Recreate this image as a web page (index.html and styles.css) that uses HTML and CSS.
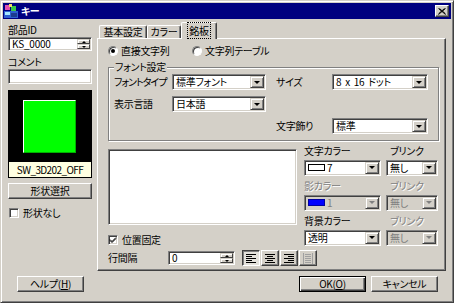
FILE: index.html
```html
<!DOCTYPE html>
<html lang="ja">
<head>
    <meta charset="UTF-8">
    <title>キー</title>
    <link rel="stylesheet" href="styles.css">
</head>
<body>
<div class="window">
    <div class="titlebar">
        <svg class="app-icon" width="14" height="14" viewBox="0 0 14 14">
            <rect x="0" y="7" width="14" height="7" fill="#2f5fd0"/>
            <rect x="1" y="8" width="5" height="3" fill="#a8e8ff"/>
            <rect x="7" y="9" width="6" height="4" fill="#1c3a90"/>
            <rect x="1" y="1" width="5" height="5" fill="#e050b0"/>
            <rect x="7" y="2" width="5" height="5" fill="#38c848"/>
            <rect x="5" y="0" width="3" height="3" fill="#f0e060"/>
        </svg>
        <span class="title">キー</span>
        <span class="close">
            <svg width="8" height="7" viewBox="0 0 8 7"><path d="M0.5 0.5L7.5 6.5M7.5 0.5L0.5 6.5M1.5 0.5L7.5 5.8M6.5 0.5L0.5 5.8" stroke="#000" stroke-width="1"/></svg>
        </span>
    </div>

    <div class="content">
        <div class="side">
            <div class="lbl">部品ID</div>
            <div class="field spin">
                <span class="val">KS_0000</span>
                <span class="spinner"><span class="sp up"><i></i></span><span class="sp down"><i></i></span></span>
            </div>
            <div class="lbl comment-lbl">コメント</div>
            <div class="field comment"></div>
            <div class="preview">
                <div class="stage"><div class="shape"></div></div>
                <div class="shape-name">SW_3D202_OFF</div>
            </div>
            <div class="btn shape-btn">形状選択</div>
            <div class="check no-shape"><span class="box"></span>形状なし</div>
            <div class="btn help">ヘルプ(<u>H</u>)</div>
        </div>

        <div class="main">
            <div class="tabs">
                <div class="tab t1">基本設定</div>
                <div class="tab t2">カラー</div>
                <div class="tab active"><span class="focus">銘板</span></div>
            </div>
            <div class="panel">
                <div class="radios">
                    <div class="radio on"><span class="dot"></span>直接文字列</div>
                    <div class="radio"><span class="dot"></span>文字列テーブル</div>
                </div>

                <fieldset class="group">
                    <legend>フォント設定</legend>
                    <div class="font-grid">
                        <span class="tight">フォントタイプ</span>
                        <div class="select"><span class="val">標準フォント</span><span class="drop"><i></i></span></div>
                        <span></span>
                        <span>サイズ</span>
                        <div class="select"><span class="val spaced">8 x 16 ドット</span><span class="drop"><i></i></span></div>
                        <span>表示言語</span>
                        <div class="select"><span class="val">日本語</span><span class="drop"><i></i></span></div>
                        <span class="deco-lbl">文字飾り</span>
                        <div class="select deco"><span class="val">標準</span><span class="drop"><i></i></span></div>
                    </div>
                </fieldset>

                <div class="lower">
                    <div class="left">
                        <div class="field textbox"></div>
                        <div class="check fixed"><span class="box"><svg width="8" height="8" viewBox="0 0 8 8"><path d="M1 3.5L3 5.5L7 1.5M1 4.5L3 6.5L7 2.5" stroke="#000" fill="none"/></svg></span>位置固定</div>
                    </div>
                    <div class="colors">
                        <span class="clbl">文字カラー</span>
                        <span class="clbl blink">ブリンク</span>
                        <div class="select"><span class="val"><i class="swatch"></i>7</span><span class="drop"><i></i></span></div>
                        <div class="select"><span class="val">無し</span><span class="drop"><i></i></span></div>

                        <span class="clbl next dis">影カラー</span>
                        <span class="clbl next blink dis">ブリンク</span>
                        <div class="select dis"><span class="val"><i class="swatch blue"></i>1</span><span class="drop"><i></i></span></div>
                        <div class="select dis"><span class="val">無し</span><span class="drop"><i></i></span></div>

                        <span class="clbl next">背景カラー</span>
                        <span class="clbl next blink dis">ブリンク</span>
                        <div class="select"><span class="val">透明</span><span class="drop"><i></i></span></div>
                        <div class="select dis"><span class="val">無し</span><span class="drop"><i></i></span></div>
                    </div>
                    <div class="spacing">
                        <span class="sp-lbl">行間隔</span>
                        <div class="field spin num">
                            <span class="val">0</span>
                            <span class="spinner"><span class="sp up"><i></i></span><span class="sp down"><i></i></span></span>
                        </div>
                        <div class="align">
                            <span class="abtn pressed"><svg width="10" height="9" viewBox="0 0 10 9"><path d="M0 0.5H10M0 2.5H6M0 4.5H10M0 6.5H6M0 8.5H10" stroke="#000"/></svg></span>
                            <span class="abtn"><svg width="10" height="9" viewBox="0 0 10 9"><path d="M0 0.5H10M2 2.5H8M0 4.5H10M2 6.5H8M0 8.5H10" stroke="#000"/></svg></span>
                            <span class="abtn"><svg width="10" height="9" viewBox="0 0 10 9"><path d="M0 0.5H10M4 2.5H10M0 4.5H10M4 6.5H10M0 8.5H10" stroke="#000"/></svg></span>
                            <span class="abtn off"><svg width="10" height="11" viewBox="0 0 10 11"><path d="M0.5 0V11M9.5 0V11M2 1.5H8M2 3.5H8M2 5.5H8M2 7.5H8M2 9.5H8" stroke="#a0a0a0"/></svg></span>
                        </div>
                    </div>
                </div>
            </div>
            <div class="actions">
                <div class="btn default">OK(<u>O</u>)</div>
                <div class="btn">キャンセル</div>
            </div>
        </div>
    </div>
</div>
</body>
</html>
```

FILE: styles.css
```css
* {
    box-sizing: border-box;
}
body {
    margin: 0;
    font-family: "Noto Sans CJK JP", "Liberation Sans", sans-serif;
    font-size: 10px;
    line-height: 12px;
    letter-spacing: -0.3px;
    white-space: nowrap;
    color: #000;
    font-feature-settings: "palt";
    background: #d4d0c8;
}
.window {
    width: 454px;
    height: 303px;
    background: #d4d0c8;
    border: 1px solid;
    border-color: #d4d0c8 #404040 #404040 #d4d0c8;
    box-shadow: inset 1px 1px #fff, inset -1px -1px #808080;
    padding: 2px;
    display: flex;
    flex-direction: column;
}

/* title bar */
.titlebar {
    height: 16px;
    background: #000080;
    color: #fff;
    display: flex;
    align-items: center;
    padding: 0 2px 0 1px;
}
.app-icon {
    flex: none;
}
.title {
    font-weight: bold;
    margin-left: 3px;
    flex: 1;
}
.close {
    width: 14px;
    height: 12px;
    background: #d4d0c8;
    border: 1px solid;
    border-color: #fff #404040 #404040 #fff;
    box-shadow: inset -1px -1px #808080;
    display: flex;
    align-items: center;
    justify-content: center;
}

/* layout */
.content {
    flex: 1;
    display: grid;
    grid-template-columns: 84px 349px;
    column-gap: 5px;
    padding: 2px 5px 8px 5px;
}
.side {
    display: flex;
    flex-direction: column;
}
.main {
    display: flex;
    flex-direction: column;
    padding-top: 1px;
}

/* generic controls */
.lbl {
    margin-top: 3px;
    height: 12px;
}
.comment-lbl {
    margin-top: 5px;
}
.field {
    background: #fff;
    border: 1px solid;
    border-color: #808080 #fff #fff #808080;
    box-shadow: inset 1px 1px #404040, inset -1px -1px #d4d0c8;
    padding: 1px;
    display: flex;
    align-items: center;
}
.field .val {
    flex: 1;
    padding-left: 2px;
    line-height: 10px;
}
.spin {
    height: 14px;
    margin-top: 1px;
}
.spin .val {
    letter-spacing: -0.2px;
}
.comment {
    height: 15px;
    margin-top: 1px;
}
.spinner {
    width: 13px;
    height: 100%;
    display: flex;
    flex-direction: column;
}
.sp {
    flex: 1;
    background: #d4d0c8;
    border: 1px solid;
    border-color: #d4d0c8 #404040 #404040 #d4d0c8;
    box-shadow: inset 1px 1px #fff;
    display: flex;
    align-items: center;
    justify-content: center;
}
.sp i {
    width: 0;
    height: 0;
    border-left: 2px solid transparent;
    border-right: 2px solid transparent;
}
.sp.up i {
    border-bottom: 2px solid #000;
}
.sp.down i {
    border-top: 2px solid #000;
}

.btn {
    height: 16px;
    background: #d4d0c8;
    border: 1px solid;
    border-color: #fff #404040 #404040 #fff;
    box-shadow: inset -1px -1px #808080;
    text-align: center;
    line-height: 13px;
}
.btn.default {
    border-color: #000;
    box-shadow: inset 1px 1px #fff, inset -1px -1px #404040, inset -2px -2px #808080;
}

.check {
    display: flex;
    align-items: center;
    height: 12px;
}
.box {
    width: 10px;
    height: 10px;
    background: #fff;
    border: 1px solid;
    border-color: #808080 #fff #fff #808080;
    box-shadow: inset 1px 1px #404040, inset -1px -1px #d4d0c8;
    margin-right: 4px;
    display: flex;
    align-items: center;
    justify-content: center;
}

/* left column */
.preview {
    margin-top: 6px;
    border: 1px solid #000;
    background: #000;
}
.stage {
    height: 71px;
    display: flex;
    align-items: center;
    justify-content: center;
    padding-right: 2px;
}
.shape {
    width: 53px;
    height: 53px;
    background: #00ff00;
    border-top: 1px solid #fff;
    border-left: 1px solid #fff;
    border-right: 1px solid #00b000;
    border-bottom: 1px solid #00b000;
}
.shape-name {
    height: 15px;
    background: #ffffe1;
    line-height: 15px;
    text-align: center;
    letter-spacing: -0.6px;
    font-feature-settings: normal;
}
.shape-btn {
    margin-top: 5px;
}
.no-shape {
    margin-top: 8px;
    padding-left: 1px;
}
.help {
    margin: auto 8px 0 9px;
}

/* tabs */
.tabs {
    display: flex;
    align-items: flex-end;
    height: 16px;
    padding-left: 2px;
}
.tab {
    height: 13px;
    border: 1px solid;
    border-bottom: 0;
    border-color: #fff #404040 #404040 #fff;
    box-shadow: inset -1px 0 #808080;
    border-radius: 2px 2px 0 0;
    text-align: center;
    line-height: 12px;
}
.t1 {
    width: 48px;
}
.t2 {
    width: 34px;
}
.tab.active {
    width: 36px;
    height: 17px;
    margin-bottom: -1px;
    background: #d4d0c8;
    position: relative;
    z-index: 1;
    padding-top: 2px;
}
.focus {
    outline: 1px dotted #000;
    padding: 0 1px;
}
.panel {
    flex: 1;
    border: 1px solid;
    border-color: #fff #404040 #404040 #fff;
    box-shadow: inset -1px -1px #808080;
    padding: 6px 7px 0 10px;
}
.actions {
    margin-top: 5px;
    display: flex;
    justify-content: flex-end;
    gap: 5px;
    padding-right: 8px;
}
.actions .btn {
    width: 67px;
}

/* radios */
.radios {
    display: flex;
    height: 12px;
}
.radio {
    display: flex;
    align-items: center;
}
.radio:first-child {
    width: 84px;
}
.dot {
    width: 10px;
    height: 10px;
    border-radius: 50%;
    background: #fff;
    border: 1px solid;
    border-color: #808080 #fff #fff #808080;
    box-shadow: inset 1px 1px #404040;
    margin-right: 3px;
    display: flex;
    align-items: center;
    justify-content: center;
}
.radio.on .dot::after {
    content: "";
    width: 4px;
    height: 4px;
    border-radius: 50%;
    background: #000;
}

/* group box */
.group {
    width: 331px;
    margin: 4px 0 0;
    padding: 0 5px 6px;
    border: 1px solid #808080;
    box-shadow: inset 1px 1px #fff, 1px 1px #fff;
}
.group legend {
    padding: 0 1px;
    background: #d4d0c8;
    line-height: 12px;
}
.font-grid {
    margin-top: 1px;
    display: grid;
    grid-template-columns: 58px 94px 10px 56px 96px;
    grid-template-rows: 16px 16px 16px;
    row-gap: 6px;
    align-items: center;
}
.tight {
    letter-spacing: -1px;
}
.spaced {
    word-spacing: 2px;
}
.deco-lbl {
    grid-row: 3;
    grid-column: 4;
}
.deco {
    grid-row: 3;
    grid-column: 5;
}

/* dropdowns */
.select {
    height: 16px;
    display: flex;
    background: #fff;
    border: 1px solid;
    border-color: #808080 #fff #fff #808080;
    box-shadow: inset 1px 1px #404040, inset -1px -1px #d4d0c8;
    padding: 1px;
}
.select .val {
    flex: 1;
    padding-left: 2px;
    line-height: 12px;
    display: flex;
    align-items: center;
}
.drop {
    width: 14px;
    background: #d4d0c8;
    border: 1px solid;
    border-color: #d4d0c8 #404040 #404040 #d4d0c8;
    box-shadow: inset 1px 1px #fff, inset -1px -1px #808080;
    display: flex;
    align-items: center;
    justify-content: center;
}
.drop i {
    width: 0;
    height: 0;
    border-left: 3px solid transparent;
    border-right: 3px solid transparent;
    border-top: 3px solid #000;
}
.select.dis {
    background: #d4d0c8;
}
.select.dis .val {
    color: #808080;
}
.select.dis .drop i {
    border-top-color: #808080;
}
.swatch {
    width: 17px;
    height: 7px;
    border: 1px solid #000;
    background: #fff;
    margin-right: 2px;
}
.swatch.blue {
    background: #0000ff;
    border-color: #0000a0;
}

/* lower area */
.lower {
    margin-top: 4px;
    display: grid;
    grid-template-columns: 189px 134px;
    column-gap: 7px;
    row-gap: 4px;
}
.textbox {
    margin-top: 4px;
    height: 76px;
}
.fixed {
    margin-top: 9px;
}
.colors {
    display: grid;
    grid-template-columns: 77px 52px;
    column-gap: 5px;
    row-gap: 2px;
}
.clbl {
    height: 12px;
}
.clbl.next {
    margin-top: 2px;
}
.clbl.blink {
    padding-left: 4px;
}
.clbl.dis {
    color: #808080;
    text-shadow: 1px 1px #fff;
}
.spacing {
    grid-column: 1 / 3;
    display: flex;
    align-items: center;
    height: 16px;
}
.sp-lbl {
    width: 60px;
}
.num {
    width: 67px;
    margin-top: 0;
}
.align {
    display: flex;
    gap: 1px;
    margin-left: 7px;
}
.abtn {
    width: 18px;
    height: 16px;
    background: #d4d0c8;
    border: 1px solid;
    border-color: #fff #404040 #404040 #fff;
    box-shadow: inset -1px -1px #808080;
    display: flex;
    align-items: center;
    justify-content: center;
}
.abtn.pressed {
    border-color: #404040 #fff #fff #404040;
    box-shadow: inset 1px 1px #808080;
    background: #e4e2dc;
}
```
